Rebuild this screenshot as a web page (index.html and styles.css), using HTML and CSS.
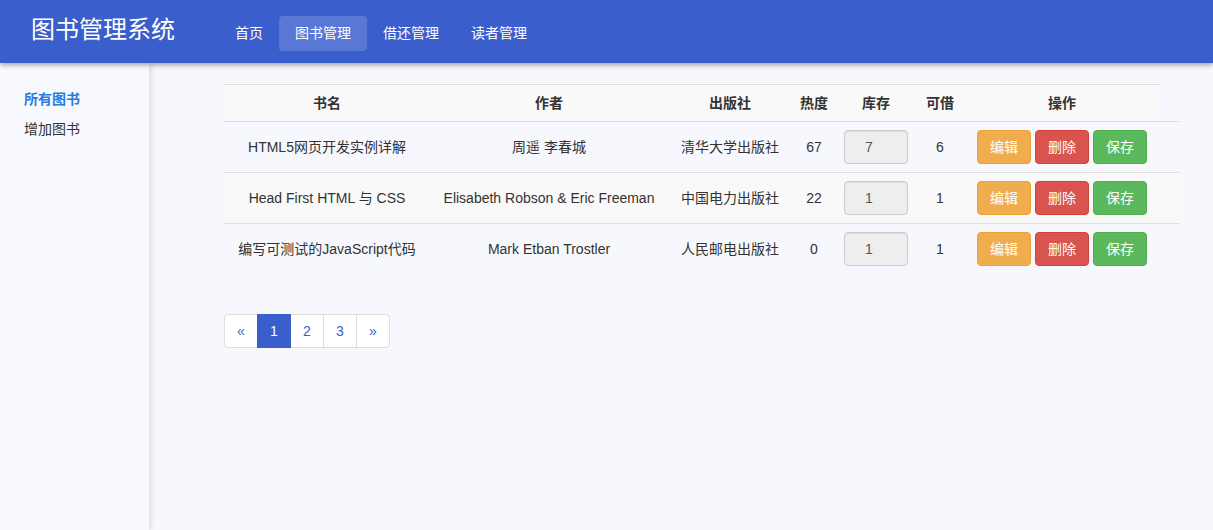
FILE: index.html
```html
<!DOCTYPE html>
<html lang="zh">
<head>
<meta charset="utf-8">
<title>图书管理系统</title>
<link rel="stylesheet" href="styles.css">
</head>
<body>
<header class="topbar">
  <div class="brand">图书管理系统</div>
  <nav class="nav">
    <a class="nav-item">首页</a>
    <a class="nav-item active">图书管理</a>
    <a class="nav-item">借还管理</a>
    <a class="nav-item">读者管理</a>
  </nav>
</header>
<div class="layout">
  <aside class="sidebar">
    <a class="side-link active">所有图书</a>
    <a class="side-link">增加图书</a>
  </aside>
  <main class="main">
    <table class="books">
      <colgroup>
        <col class="c1"><col class="c2"><col class="c3"><col class="c4"><col class="c5"><col class="c6"><col class="c7"><col class="c8">
      </colgroup>
      <tbody>
        <tr class="head">
          <th>书名</th><th>作者</th><th>出版社</th><th>热度</th><th>库存</th><th>可借</th><th>操作</th>
        </tr>
        <tr>
          <td>HTML5网页开发实例详解</td><td>周遥 李春城</td><td>清华大学出版社</td><td>67</td>
          <td><input class="stock" type="text" value="7" readonly></td><td>6</td>
          <td class="ops"><button class="btn warn">编辑</button> <button class="btn danger">删除</button> <button class="btn ok">保存</button></td><td></td>
        </tr>
        <tr class="striped">
          <td>Head First HTML 与 CSS</td><td>Elisabeth Robson &amp; Eric Freeman</td><td>中国电力出版社</td><td>22</td>
          <td><input class="stock" type="text" value="1" readonly></td><td>1</td>
          <td class="ops"><button class="btn warn">编辑</button> <button class="btn danger">删除</button> <button class="btn ok">保存</button></td><td></td>
        </tr>
        <tr>
          <td>编写可测试的JavaScript代码</td><td>Mark Etban Trostler</td><td>人民邮电出版社</td><td>0</td>
          <td><input class="stock" type="text" value="1" readonly></td><td>1</td>
          <td class="ops"><button class="btn warn">编辑</button> <button class="btn danger">删除</button> <button class="btn ok">保存</button></td><td></td>
        </tr>
      </tbody>
    </table>
    <ul class="pagination">
      <li><a>&laquo;</a></li>
      <li class="active"><a>1</a></li>
      <li><a>2</a></li>
      <li><a>3</a></li>
      <li><a>&raquo;</a></li>
    </ul>
  </main>
</div>
</body>
</html>
```
FILE: styles.css
```css
html, body {
  margin: 0;
  padding: 0;
}
body {
  font-family: "Liberation Sans", Arial, "Noto Sans CJK SC", sans-serif;
  font-size: 14px;
  line-height: 20px;
  color: #333;
  background: #f7f8fd;
}
.topbar {
  position: relative;
  z-index: 2;
  height: 63px;
  background: #3a5ecc;
  display: flex;
  align-items: center;
  padding-left: 31px;
  box-shadow: 0 2px 5px rgba(0, 0, 0, 0.35);
}
.brand {
  color: #fff;
  font-size: 24px;
  line-height: 30px;
  margin-top: -3px;
  margin-right: 44px;
}
.nav {
  display: flex;
  margin-top: 4px;
}
.nav-item {
  color: #fff;
  height: 35px;
  line-height: 35px;
  padding: 0 16px;
  border-radius: 4px;
}
.nav-item.active {
  background: rgba(255, 255, 255, 0.16);
}
.layout {
  display: flex;
  min-height: calc(100vh - 63px);
}
.sidebar {
  position: relative;
  z-index: 1;
  width: 149px;
  flex: none;
  background: #f7f9fe;
  padding: 26px 0 0 24px;
  box-sizing: border-box;
  display: flex;
  flex-direction: column;
  box-shadow: 3px 0 4px rgba(0, 0, 0, 0.09);
}
.side-link {
  line-height: 20px;
  margin-bottom: 10px;
  color: #333;
}
.side-link.active {
  color: #2a7be0;
  font-weight: bold;
}
.main {
  flex: 1;
  padding: 21px 0 0 75px;
}
.books {
  border-collapse: collapse;
  border-spacing: 0;
  table-layout: fixed;
  width: 955px;
  margin-bottom: 20px;
}
.c1 { width: 206px; }
.c2 { width: 238px; }
.c3 { width: 124px; }
.c4 { width: 44px; }
.c5 { width: 80px; }
.c6 { width: 48px; }
.c7 { width: 196px; }
.c8 { width: 19px; }
.books th, .books td {
  padding: 8px;
  line-height: 20px;
  text-align: center;
  vertical-align: middle;
  border-top: 1px solid #ddd;
  white-space: nowrap;
}
.books th {
  font-weight: bold;
  background: #f9f9f9;
}
.books tr.striped td {
  background: #f9f9f9;
}
.stock {
  box-sizing: border-box;
  width: 64px;
  height: 34px;
  padding: 6px 12px 6px 20px;
  border: 1px solid #ccc;
  border-radius: 4px;
  background: #eee;
  color: #555;
  font-family: inherit;
  font-size: 14px;
  display: block;
  margin: 0 auto;
  box-shadow: inset 0 1px 1px rgba(0, 0, 0, 0.075);
}
.ops {
  font-size: 0;
}
.btn {
  display: inline-block;
  box-sizing: border-box;
  height: 34px;
  padding: 6px 12px;
  font-family: inherit;
  font-size: 14px;
  line-height: 20px;
  border: 1px solid transparent;
  border-radius: 4px;
  color: #fff;
  margin: 0 2px;
  vertical-align: middle;
}
.btn.warn { background: #f0ad4e; border-color: #eea236; }
.btn.danger { background: #d9534f; border-color: #d43f3a; }
.btn.ok { background: #5cb85c; border-color: #4cae4c; }
.pagination {
  display: flex;
  list-style: none;
  margin: 40px 0 20px;
  padding: 0;
}
.pagination li a {
  display: block;
  box-sizing: border-box;
  width: 34px;
  height: 34px;
  line-height: 20px;
  padding: 6px 0;
  text-align: center;
  border: 1px solid #ddd;
  margin-left: -1px;
  background: #fff;
  color: #3a5ecc;
}
.pagination li:first-child a {
  margin-left: 0;
  border-radius: 4px 0 0 4px;
}
.pagination li:last-child a {
  border-radius: 0 4px 4px 0;
}
.pagination li.active a {
  background: #3a5ecc;
  border-color: #3a5ecc;
  color: #fff;
  position: relative;
  z-index: 1;
}
```
